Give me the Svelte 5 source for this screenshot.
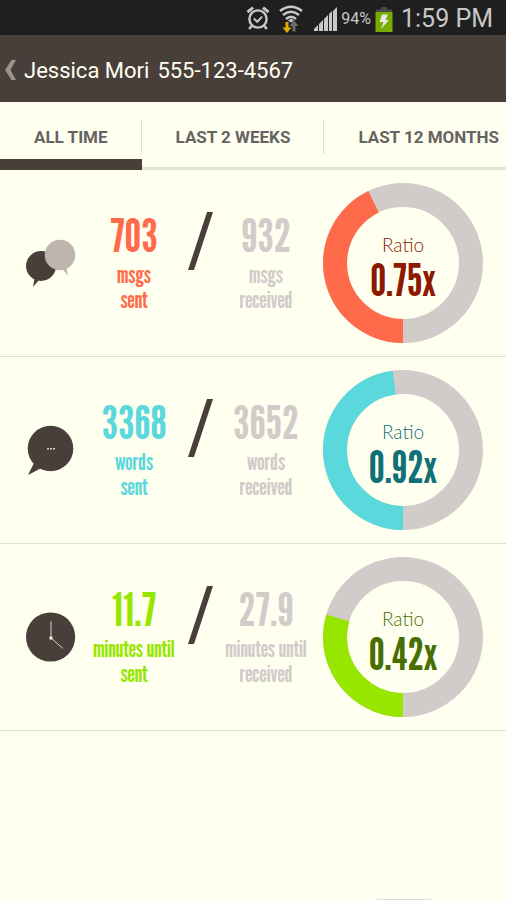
<script>
  const tabs = ['ALL TIME', 'LAST 2 WEEKS', 'LAST 12 MONTHS'];
  let active = $state(0);

  const rows = [
    { icon: 'bubbles', unit: 'msgs', sent: '703', received: '932', ratio: 0.75, color: '#ff6b4a', dark: '#8b1a00' },
    { icon: 'bubble', unit: 'words', sent: '3368', received: '3652', ratio: 0.92, color: '#5bd8dc', dark: '#0f7078' },
    { icon: 'clock', unit: 'minutes until', sent: '11.7', received: '27.9', ratio: 0.42, color: '#96e600', dark: '#466e00' }
  ];
</script>

<div class="screen">
  <div class="status">
    <svg width="24" height="26" viewBox="0 0 24 26" fill="none" stroke="#c8c8c8" aria-hidden="true">
      <circle cx="12" cy="14" r="8.6" stroke-width="2.4" />
      <path d="M7.8 13.5l3.4 3.3 5-5.2" stroke-width="2" />
      <path d="M1.5 7.2L7 2.6M22.5 7.2L17 2.6" stroke-width="3" />
      <path d="M5.5 21l-2.3 3M18.500 21l2.300 3" stroke-width="2.600" />
    </svg>
    <svg class="wifi" width="26" height="28" viewBox="0 0 26 28" aria-hidden="true">
      <g fill="none" stroke="#c8c8c8" stroke-width="2.6">
        <path d="M2 6Q13-2.500 24 6" />
        <path d="M5 10Q13 3.500 21 10" />
        <path d="M8 14Q13 9.500 18 14" />
      </g>
      <path d="M10 15.500l3-2 3 2-3 2z" fill="#c8c8c8" />
      <path d="M7.500 17h3v5.500h3L9 28l-4.500-5.500h3z" fill="#e0b000" />
      <path d="M14.500 26.500V21h-3l4.500-5.500 4.500 5.500h-3v5.500z" fill="#6c6c6c" />
    </svg>
    <svg class="signal" width="24" height="24" viewBox="0 0 24 24" fill="#c8c8c8" aria-hidden="true">
      <path d="M0 24v-2l4-4v6zM5 24v-7l4-4v11zM10 24V12l4-4v16zM15 24V7l3-3v20zM19 24V4l4-4v24z" />
    </svg>
    <span class="percent">94%</span>
    <svg class="battery" width="18" height="25" viewBox="0 0 18 25" aria-hidden="true">
      <path d="M6 0h6v2.500h5V5H1V2.500h5z" fill="#4a4a4a" />
      <path d="M.5 5h17v20H.5z" fill="#78ac00" />
      <path d="M7 7.500h6L10.500 13H14l-8 9 2.500-7H4.500z" fill="#e8e8e8" />
    </svg>
    <span class="time">1:59 PM</span>
  </div>

  <header>
    <button class="back" aria-label="Back">
      <svg width="11" height="20" viewBox="0 0 11 20" aria-hidden="true">
        <path d="M6.500 0H11L5.500 10 11 20H6.500L0 10z" fill="#99938d" />
      </svg>
    </button>
    <h1>Jessica Mori</h1>
    <span class="phone">555-123-4567</span>
  </header>

  <nav>
    {#each tabs as tab, i}
      <button class:active={active === i} onclick={() => (active = i)}><span>{tab}</span></button>
    {/each}
  </nav>

  <main>
    {#each rows as row}
      <section>
        <div class="icon">
          <svg width="50" height="50" viewBox="0 0 50 50" aria-hidden="true">
            {#if row.icon === 'bubbles'}
              <circle cx="15" cy="28" r="15" fill="#493f3a" />
              <path d="M8.500 41L7 49 13 42z" fill="#493f3a" />
              <circle cx="34" cy="17" r="15.300" fill="#beb5af" />
              <path d="M36.500 31l5.500 7L40.500 30z" fill="#beb5af" />
            {:else if row.icon === 'bubble'}
              <circle cx="24.500" cy="23.500" r="22.800" fill="#493f3a" />
              <path d="M8.500 37L2 50 15.500 43z" fill="#493f3a" />
              <path d="M21 23h2v1.500h-2zM24 23h2v1.500h-2zM27 23h2v1.500h-2z" fill="#d8d2cd" />
            {:else}
              <circle cx="24.600" cy="25" r="24.600" fill="#493f3a" />
              <path d="M25 9.500V26l12 10.500" fill="none" stroke="#d8d2cd" stroke-width="1" />
              <circle cx="25" cy="26" r="1.700" fill="#f4f1e8" />
            {/if}
          </svg>
        </div>
        <div class="stat" style:color={row.color}>
          <strong>{row.sent}</strong>
          <span>{row.unit}<br />sent</span>
        </div>
        <svg class="slash" width="26" height="58" viewBox="0 0 26 58" aria-hidden="true">
          <path d="M20 0h6L7 58H1z" fill="#493f3a" />
        </svg>
        <div class="stat muted">
          <strong>{row.received}</strong>
          <span>{row.unit}<br />received</span>
        </div>
        <div class="donut" style:color={row.dark}>
          <svg width="160" height="160" viewBox="0 0 160 160" aria-hidden="true">
            <circle cx="80" cy="80" r="68" fill="none" stroke="#d1cbc9" stroke-width="24" />
            <circle
              cx="80" cy="80" r="68" fill="none" stroke={row.color} stroke-width="24" pathLength="100"
              stroke-dasharray="{(row.ratio / (1 + row.ratio)) * 100} 100" transform="rotate(90 80 80)"
            />
          </svg>
          <div class="ratio">
            <span>Ratio</span>
            <strong>{row.ratio}x</strong>
          </div>
        </div>
      </section>
    {/each}
  </main>
  <div class="handle"></div>
</div>

<style>
  :global(body) {
    margin: 0;
    background: #fffff0;
  }
  .screen {
    display: flex;
    flex-direction: column;
    min-height: 100vh;
    overflow: hidden;
    background: #fffff0;
    font-family: Roboto, 'Liberation Sans', sans-serif;
  }
  button {
    border: 0;
    padding: 0;
    background: none;
    font: inherit;
    cursor: pointer;
  }
  .status {
    display: flex;
    align-items: center;
    justify-content: flex-end;
    height: 35px;
    padding-right: 13px;
    background: #1f1f1f;
    color: #c8c8c8;
  }
  .wifi {
    margin: 2px 0 0 8px;
  }
  .signal {
    margin: 3px 0 0 10px;
  }
  .percent {
    margin: 2px 0 0 3px;
    font-size: 16px;
  }
  .battery {
    margin: 3px 8px 0 4px;
  }
  .time {
    padding-top: 2px;
    font-size: 25px;
    line-height: 33px;
  }
  header {
    display: flex;
    align-items: center;
    height: 64px;
    padding: 3px 0 0 5px;
    background: #493f3a;
    color: #fffff0;
    font-size: 22px;
  }
  .back {
    display: flex;
    width: 19px;
  }
  h1 {
    margin: 0 8px 0 0;
    font-size: 22px;
    font-weight: 400;
  }
  nav {
    display: flex;
    height: 65px;
    border-bottom: 3px solid #e4e4d6;
  }
  nav button {
    flex: none;
    height: 68px;
    padding: 18px 0 16px;
    box-sizing: border-box;
    color: #666462;
    font-size: 17px;
    font-weight: 700;
  }
  nav button span {
    display: block;
    padding: 0 33px 0 34px;
    border-right: 1px solid #deded2;
    line-height: 34px;
  }
  nav button.active {
    padding-bottom: 5px;
    border-bottom: 11px solid #493f3a;
  }
  section {
    display: grid;
    grid-template-columns: 67fr 100fr 32fr 100fr 174fr;
    height: 186px;
    padding: 0 16px 0 17px;
    border-bottom: 1px solid #deded2;
  }
  .icon {
    display: flex;
    justify-content: center;
    padding-top: 68px;
  }
  .stat {
    display: flex;
    flex-direction: column;
    align-items: center;
    padding-top: 39px;
    min-width: 0;
    text-align: center;
    white-space: nowrap;
    font-family: 'League Gothic', 'Roboto Condensed', 'Liberation Sans Narrow', sans-serif;
  }
  .stat strong {
    font-size: 47px;
    font-weight: 400;
    line-height: 53px;
  }
  .stat span {
    font-size: 24px;
    line-height: 25px;
  }
  .muted {
    color: #d1cbc9;
  }
  .slash {
    margin-top: 42px;
    justify-self: center;
  }
  .donut {
    display: grid;
    place-items: start center;
    padding-top: 13px;
  }
  .donut > * {
    grid-area: 1 / 1;
  }
  .ratio {
    display: flex;
    flex-direction: column;
    align-items: center;
    padding-top: 50px;
  }
  .ratio span {
    font-family: Lato, sans-serif;
    font-size: 19px;
    font-weight: 300;
    line-height: 24px;
  }
  .ratio strong {
    font-family: 'League Gothic', 'Roboto Condensed', 'Liberation Sans Narrow', sans-serif;
    font-size: 45px;
    font-weight: 400;
    line-height: 44px;
  }
  .handle {
    width: 54px;
    height: 1px;
    margin: auto 75px 0 auto;
    background: #dcdcd4;
  }
</style>
